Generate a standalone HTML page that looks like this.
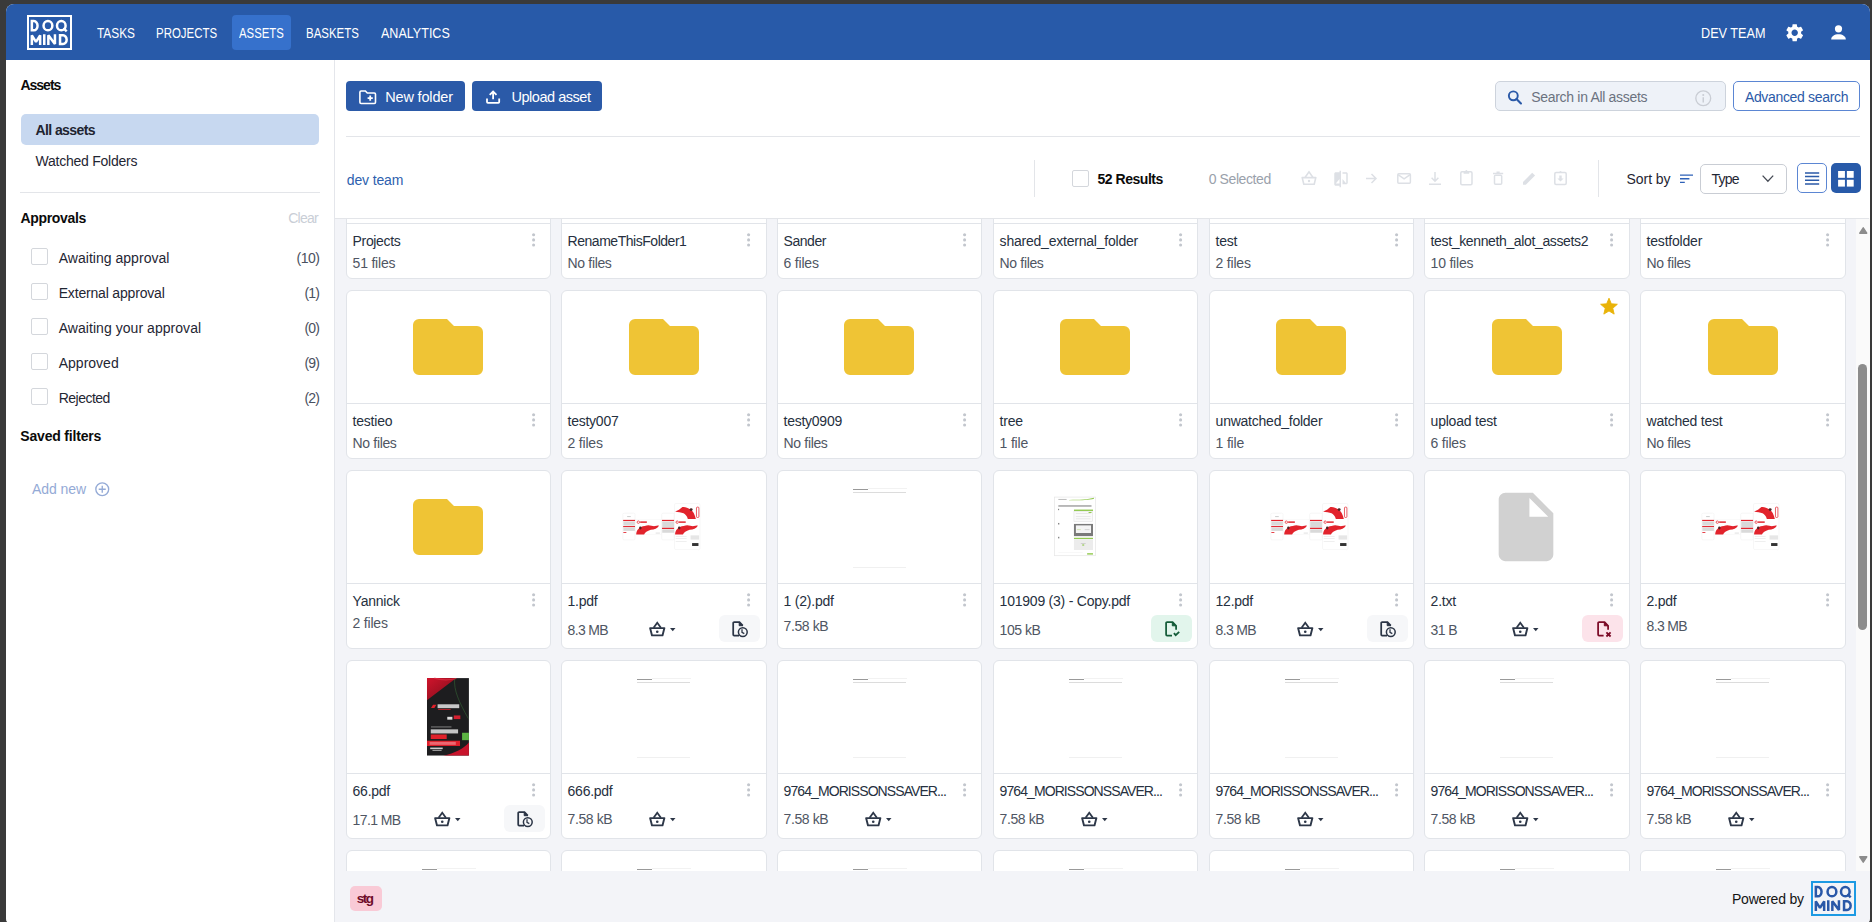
<!DOCTYPE html><html><head><meta charset="utf-8"><style>
*{margin:0;padding:0;box-sizing:border-box}
html,body{width:1872px;height:922px;overflow:hidden;background:#3a3a3a;font-family:"Liberation Sans",sans-serif}
.t{position:absolute;white-space:nowrap;line-height:1}
.b{position:absolute;display:block}
svg{position:absolute;overflow:visible}
#win{position:absolute;left:6px;top:4px;width:1864px;height:922px;border-radius:8px;overflow:hidden;background:#fff}
#pg{position:absolute;left:-6px;top:-4px;width:1872px;height:934px}
</style></head><body><div id="win"><div id="pg">
<header>
<div class="b" style="left:6px;top:4px;width:1864px;height:56px;background:#285aa9"></div>
<svg style="left:27px;top:15px;" width="45" height="35" viewBox="0 0 45 35"><rect x="1" y="1" width="43" height="33" fill="none" stroke="#fff" stroke-width="2"/><path d="M4.85 6.05h2.1a3.6 4.65 0 0 1 3.6 4.65a3.6 4.65 0 0 1-3.6 4.65h-2.1z" fill="none" stroke="#fff" stroke-width="2.5" stroke-miterlimit="1.5"/><ellipse cx="20.95" cy="10.7" rx="4.4" ry="4.65" fill="none" stroke="#fff" stroke-width="2.5" stroke-miterlimit="1.5"/><ellipse cx="34.3" cy="10.7" rx="4.3" ry="4.65" fill="none" stroke="#fff" stroke-width="2.5" stroke-miterlimit="1.5"/><path d="M36.4 13.2l3.3 3.1" fill="none" stroke="#fff" stroke-width="2.5" stroke-miterlimit="1.5"/><path d="M4.85 30.1V20.3l4.15 6.6 4.15-6.6v9.8" fill="none" stroke="#fff" stroke-width="2.5" stroke-miterlimit="1.5"/><path d="M17.25 19.3v10.8" fill="none" stroke="#fff" stroke-width="2.5" stroke-miterlimit="1.5"/><path d="M21.35 30.1V20.3l6.6 8.8v-9.8" fill="none" stroke="#fff" stroke-width="2.5" stroke-miterlimit="1.5"/><path d="M33.05 20.35h3a3.6 4.35 0 0 1 3.6 4.35a3.6 4.35 0 0 1-3.6 4.35h-3z" fill="none" stroke="#fff" stroke-width="2.5" stroke-miterlimit="1.5"/></svg>
<div class="b" style="left:232px;top:15px;width:59px;height:35px;background:#3671cc;border-radius:4px"></div>
<span class="t" style="left:96.70px;top:26.18px;font-size:14.50px;transform:scaleX(0.8178);transform-origin:0 0;color:#fff;">TASKS</span>
<span class="t" style="left:156.30px;top:26.18px;font-size:14.50px;transform:scaleX(0.7900);transform-origin:0 0;color:#fff;">PROJECTS</span>
<span class="t" style="left:239.20px;top:26.18px;font-size:14.50px;transform:scaleX(0.7830);transform-origin:0 0;color:#fff;">ASSETS</span>
<span class="t" style="left:305.90px;top:26.18px;font-size:14.50px;transform:scaleX(0.7909);transform-origin:0 0;color:#fff;">BASKETS</span>
<span class="t" style="left:380.90px;top:26.18px;font-size:14.50px;transform:scaleX(0.8654);transform-origin:0 0;color:#fff;">ANALYTICS</span>
<span class="t" style="left:1700.50px;top:25.68px;font-size:14.50px;transform:scaleX(0.8733);transform-origin:0 0;color:#fff;">DEV TEAM</span>
<svg style="left:1783.6px;top:21.8px;" width="21.4" height="21.4" viewBox="0 0 24 24"><path fill="#fff" d="M19.14 12.94c.04-.3.06-.61.06-.94 0-.32-.02-.64-.07-.94l2.03-1.58c.18-.14.23-.41.12-.61l-1.92-3.32c-.12-.22-.37-.29-.59-.22l-2.39.96c-.5-.38-1.03-.7-1.62-.94l-.36-2.54c-.04-.24-.24-.41-.48-.41h-3.84c-.24 0-.43.17-.47.41l-.36 2.54c-.59.24-1.13.57-1.62.94l-2.39-.96c-.22-.08-.47 0-.59.22L2.74 8.87c-.12.21-.08.47.12.61l2.03 1.58c-.05.3-.09.63-.09.94s.02.64.07.94l-2.03 1.58c-.18.14-.23.41-.12.61l1.92 3.32c.12.22.37.29.59.22l2.39-.96c.5.38 1.03.7 1.62.94l.36 2.54c.05.24.24.41.48.41h3.84c.24 0 .44-.17.47-.41l.36-2.54c.59-.24 1.13-.56 1.62-.94l2.39.96c.22.08.47 0 .59-.22l1.92-3.32c.12-.22.07-.47-.12-.61l-2.01-1.58zM12 15.6c-1.98 0-3.6-1.62-3.6-3.6s1.62-3.6 3.6-3.6 3.6 1.62 3.6 3.6-1.62 3.6-3.6 3.6z"/></svg>
<svg style="left:1831px;top:24.8px;" width="15" height="15" viewBox="0 0 15 15"><circle cx="7.5" cy="3.8" r="3.6" fill="#fff"/><path fill="#fff" d="M0.2 14.4c0-3.2 3.3-5.2 7.3-5.2s7.3 2 7.3 5.2z"/></svg>
</header>
<aside>
<div class="b" style="left:6px;top:60px;width:328px;height:870px;background:#fff;border-right:1px solid #e4e6eb;width:329px"></div>
<span class="t" style="left:20.40px;top:78.10px;font-size:14.00px;font-weight:bold;letter-spacing:-0.983px;color:#0b0b0b;">Assets</span>
<div class="b" style="left:21px;top:114px;width:298px;height:31px;background:#c7d8f0;border-radius:5px"></div>
<span class="t" style="left:35.50px;top:123.30px;font-size:14.00px;font-weight:bold;letter-spacing:-0.597px;color:#1e2430;">All assets</span>
<span class="t" style="left:35.50px;top:153.90px;font-size:14.00px;letter-spacing:-0.236px;color:#1f2633;">Watched Folders</span>
<div class="b" style="left:20px;top:192px;width:300px;height:1px;background:#e3e5e9"></div>
<span class="t" style="left:20.40px;top:210.80px;font-size:14.00px;font-weight:bold;letter-spacing:-0.308px;color:#0b0b0b;">Approvals</span>
<span class="t" style="left:288.20px;top:210.90px;font-size:14.00px;letter-spacing:-0.714px;color:#c9ced6;">Clear</span>
<div class="b" style="left:31px;top:248px;width:17px;height:17px;border:1px solid #d4d7dc;border-radius:2px;background:#fff"></div>
<span class="t" style="left:58.70px;top:250.60px;font-size:14.00px;letter-spacing:0.028px;color:#1f2633;">Awaiting approval</span>
<span class="t" style="left:296.60px;top:250.60px;font-size:14.00px;letter-spacing:-0.566px;color:#4a5160;">(10)</span>
<div class="b" style="left:31px;top:283px;width:17px;height:17px;border:1px solid #d4d7dc;border-radius:2px;background:#fff"></div>
<span class="t" style="left:58.70px;top:285.60px;font-size:14.00px;letter-spacing:-0.178px;color:#1f2633;">External approval</span>
<span class="t" style="left:304.60px;top:285.60px;font-size:14.00px;letter-spacing:-0.955px;color:#4a5160;">(1)</span>
<div class="b" style="left:31px;top:318px;width:17px;height:17px;border:1px solid #d4d7dc;border-radius:2px;background:#fff"></div>
<span class="t" style="left:58.70px;top:320.60px;font-size:14.00px;letter-spacing:0.049px;color:#1f2633;">Awaiting your approval</span>
<span class="t" style="left:304.60px;top:320.60px;font-size:14.00px;letter-spacing:-0.955px;color:#4a5160;">(0)</span>
<div class="b" style="left:31px;top:353px;width:17px;height:17px;border:1px solid #d4d7dc;border-radius:2px;background:#fff"></div>
<span class="t" style="left:58.70px;top:355.60px;font-size:14.00px;letter-spacing:0.010px;color:#1f2633;">Approved</span>
<span class="t" style="left:304.60px;top:355.60px;font-size:14.00px;letter-spacing:-0.955px;color:#4a5160;">(9)</span>
<div class="b" style="left:31px;top:388px;width:17px;height:17px;border:1px solid #d4d7dc;border-radius:2px;background:#fff"></div>
<span class="t" style="left:58.70px;top:390.60px;font-size:14.00px;letter-spacing:-0.508px;color:#1f2633;">Rejected</span>
<span class="t" style="left:304.60px;top:390.60px;font-size:14.00px;letter-spacing:-0.955px;color:#4a5160;">(2)</span>
<span class="t" style="left:20.30px;top:428.80px;font-size:14.00px;font-weight:bold;letter-spacing:-0.189px;color:#0b0b0b;">Saved filters</span>
<span class="t" style="left:32.00px;top:481.80px;font-size:14.00px;letter-spacing:-0.080px;color:#94aad6;">Add new</span>
<svg style="left:94.5px;top:481.5px;" width="14.5" height="14.5" viewBox="0 0 14 14"><circle cx="7" cy="7" r="6.2" fill="none" stroke="#94aad6" stroke-width="1.3"/><path d="M7 3.6v6.8M3.6 7h6.8" stroke="#94aad6" stroke-width="1.3"/></svg>
</aside>
<main>
<div class="b" style="left:335px;top:60px;width:1535px;height:158px;background:#fff"></div>
<div class="b" style="left:346px;top:81px;width:119px;height:30px;background:#2b5aa8;border-radius:4px"></div>
<svg style="left:358.8px;top:89.6px;" width="18" height="14" viewBox="0 0 18 14"><path d="M.9 2.2c0-.7.5-1.2 1.2-1.2h4.3l1.9 2h7c.7 0 1.2.5 1.2 1.2v8.1c0 .7-.5 1.2-1.2 1.2H2.1c-.7 0-1.2-.5-1.2-1.2z" fill="none" stroke="#fff" stroke-width="1.6"/><path d="M11.2 5.5v5.2M8.6 8.1h5.2" stroke="#fff" stroke-width="1.8"/></svg>
<span class="t" style="left:385.30px;top:89.97px;font-size:14.50px;letter-spacing:-0.178px;color:#fff;">New folder</span>
<div class="b" style="left:472px;top:81px;width:130px;height:30px;background:#2b5aa8;border-radius:4px"></div>
<svg style="left:486.3px;top:89.6px;" width="14.2" height="14" viewBox="0 0 14.2 14"><path d="M7.1 9.2V1.6M3.7 4.9l3.4-3.4 3.4 3.4" fill="none" stroke="#fff" stroke-width="1.8"/><path d="M1 8.6v3.4c0 .5.4.9.9.9h10.4c.5 0 .9-.4.9-.9V8.6" fill="none" stroke="#fff" stroke-width="1.8"/></svg>
<span class="t" style="left:511.40px;top:89.97px;font-size:14.50px;letter-spacing:-0.458px;color:#fff;">Upload asset</span>
<div class="b" style="left:1495px;top:81px;width:231px;height:30px;background:#eef2f8;border:1px solid #cdd3dc;border-radius:5px"></div>
<svg style="left:1507px;top:89.5px;" width="16.5" height="14.5" viewBox="0 0 16 15"><circle cx="6" cy="6" r="4.6" fill="none" stroke="#2b5aa8" stroke-width="2"/><path d="M9.3 9.3l4.6 4.6" stroke="#2b5aa8" stroke-width="2.2" stroke-linecap="round"/></svg>
<span class="t" style="left:1531.30px;top:90.40px;font-size:14.00px;letter-spacing:-0.314px;color:#6b7280;">Search in All assets</span>
<svg style="left:1695px;top:89.5px;" width="16.5" height="16.5" viewBox="0 0 16 16"><circle cx="8" cy="8" r="7.2" fill="none" stroke="#c9cdd4" stroke-width="1.3"/><circle cx="8" cy="4.9" r="1" fill="#c9cdd4"/><path d="M8 7v5" stroke="#c9cdd4" stroke-width="1.4"/></svg>
<div class="b" style="left:1733px;top:81px;width:127px;height:30px;border:1px solid #5b86d3;border-radius:5px;background:#fff"></div>
<span class="t" style="left:1744.90px;top:90.40px;font-size:14.00px;letter-spacing:-0.327px;color:#2b5aa8;">Advanced search</span>
<div class="b" style="left:346px;top:136px;width:1514px;height:1px;background:#e3e5e9"></div>
<span class="t" style="left:346.80px;top:172.60px;font-size:14.00px;letter-spacing:-0.141px;color:#2e5fae;">dev team</span>
<div class="b" style="left:1034px;top:160px;width:1px;height:37px;background:#e3e5e9"></div>
<div class="b" style="left:1072px;top:170px;width:17px;height:17px;border:1px solid #d4d7dc;border-radius:2px;background:#fff"></div>
<span class="t" style="left:1097.50px;top:172.10px;font-size:14.00px;font-weight:bold;letter-spacing:-0.470px;color:#0b0b0b;">52 Results</span>
<span class="t" style="left:1208.70px;top:172.10px;font-size:14.00px;letter-spacing:-0.395px;color:#9aa1ab;">0 Selected</span>
<svg style="left:1301px;top:171px;" width="16" height="14" viewBox="0 0 16 14"><path d="M1.2 6.6h13.6l-1.6 6.6H2.8z" fill="none" stroke="#dde0e5" stroke-width="1.6" stroke-linejoin="round"/><path d="M4.2 6.2L8 0.8l3.8 5.4" fill="none" stroke="#dde0e5" stroke-width="1.6"/><circle cx="8" cy="10" r="1.2" fill="#dde0e5"/></svg>
<svg style="left:1332px;top:169.65px;" width="18" height="18" viewBox="0 0 24 24"><path fill="#dde0e5" d="M10 3H5c-1.11 0-2 .9-2 2v14c0 1.1.89 2 2 2h5v2h2V1h-2v2zm0 15H5l5-6v6zm9-15h-5v2h5v13l-5-6v7h5c1.1 0 2-.9 2-2V5c0-1.1-.9-2-2-2z"/></svg>
<svg style="left:1366px;top:173px;" width="11.5" height="11" viewBox="0 0 11.5 11"><path d="M0 5.5h10M5.5 1l4.5 4.5L5.5 10" fill="none" stroke="#dde0e5" stroke-width="1.5"/></svg>
<svg style="left:1396.6px;top:173.2px;" width="14.2" height="11" viewBox="0 0 14.2 11"><rect x=".8" y=".8" width="12.6" height="9.4" rx="1" fill="none" stroke="#dde0e5" stroke-width="1.5"/><path d="M1 1.6l6.1 4.2 6.1-4.2" fill="none" stroke="#dde0e5" stroke-width="1.5"/></svg>
<svg style="left:1429px;top:172px;" width="12" height="13" viewBox="0 0 12 13"><path d="M6 0v9M2.6 5.8L6 9.2l3.4-3.4M0 12.2h12" fill="none" stroke="#dde0e5" stroke-width="1.5"/></svg>
<svg style="left:1460.3px;top:170px;" width="12.8" height="15.5" viewBox="0 0 12.8 15.5"><rect x=".8" y="1.8" width="11.2" height="13" rx="1.2" fill="none" stroke="#dde0e5" stroke-width="1.5"/><path d="M3.6 1.2h5.6v2.6H3.6z" fill="#dde0e5"/><circle cx="6.4" cy="1" r="1" fill="#dde0e5"/></svg>
<svg style="left:1492.7px;top:172px;" width="10.2" height="13" viewBox="0 0 10.2 13"><path d="M0 1.5h10.2" stroke="#dde0e5" stroke-width="1.5"/><path d="M3.5 .2h3.2" stroke="#dde0e5" stroke-width="1.5"/><rect x="1.5" y="3.2" width="7.2" height="9.1" rx="1" fill="none" stroke="#dde0e5" stroke-width="1.5"/></svg>
<svg style="left:1523px;top:172.3px;" width="13" height="12.7" viewBox="0 0 13 12.7"><path d="M0 12.7v-2.8L9.2.7l2.9 2.9L2.8 12.7z" fill="#dde0e5"/></svg>
<svg style="left:1554px;top:170.8px;" width="13" height="14.2" viewBox="0 0 13 14.2"><rect x=".8" y="1.6" width="11.4" height="11.8" rx="1.2" fill="none" stroke="#dde0e5" stroke-width="1.5"/><circle cx="6.5" cy="1" r="1" fill="#dde0e5"/><path d="M5.3 4.6h2.4v3h1.9L6.5 10.6 3.4 7.6h1.9z" fill="#dde0e5"/></svg>
<div class="b" style="left:1598px;top:160px;width:1px;height:37px;background:#e3e5e9"></div>
<span class="t" style="left:1626.60px;top:172.20px;font-size:14.00px;letter-spacing:-0.075px;color:#1f2633;">Sort by</span>
<svg style="left:1680px;top:174px;" width="13.5" height="10" viewBox="0 0 13.5 10"><path d="M0 1.1h13M0 4.75h9.4M0 8.4h4.8" stroke="#2f62b8" stroke-width="1.4"/></svg>
<div class="b" style="left:1700px;top:164px;width:86.5px;height:29.5px;border:1px solid #c9cdd4;border-radius:5px;background:#fff"></div>
<span class="t" style="left:1711.40px;top:172.20px;font-size:14.00px;letter-spacing:-0.717px;color:#1f2633;">Type</span>
<svg style="left:1762px;top:175.4px;" width="11.8" height="7" viewBox="0 0 11.8 7"><path d="M.6 .6l5.3 5.6L11.2.6" fill="none" stroke="#474c56" stroke-width="1.3"/></svg>
<div class="b" style="left:1797px;top:163px;width:29.5px;height:30px;border:1px solid #5b86d3;border-radius:5px;background:#fff"></div>
<svg style="left:1805.4px;top:172.2px;" width="14.2" height="12.5" viewBox="0 0 14.2 12.5"><path d="M0 .9h14.2M0 4.55h14.2M0 8.2h14.2M0 11.9h14.2" stroke="#2b5aa8" stroke-width="1.5"/></svg>
<div class="b" style="left:1831px;top:163px;width:29.5px;height:30px;background:#285aa9;border-radius:5px"></div>
<svg style="left:1837.6px;top:171px;" width="15.8" height="15.6" viewBox="0 0 16 16"><rect x="0" y="0" width="7" height="7" fill="#fff"/><rect x="9" y="0" width="7" height="7" fill="#fff"/><rect x="0" y="9" width="7" height="7" fill="#fff"/><rect x="9" y="9" width="7" height="7" fill="#fff"/></svg>
<div class="b" style="left:335px;top:218px;width:1535px;height:716px;background:#f3f4f8"></div>
<div class="b" style="left:335px;top:218px;width:1520px;height:653px;overflow:hidden">
<div class="b" style="left:11px;top:-108px;width:205px;height:169px;background:#fff;border:1px solid #e1e4e9;border-radius:6px"></div>
<div class="b" style="left:12px;top:5px;width:203px;height:1px;background:#e1e4e9"></div>
<svg style="left:78px;top:-79.5px;" width="70" height="56" viewBox="0 0 70 56"><path d="M0 6a6 6 0 0 1 6-6h28l7 7h23a6 6 0 0 1 6 6v37a6 6 0 0 1-6 6H6a6 6 0 0 1-6-6z" fill="#efc435"/></svg>
<span class="t" style="left:17.60px;top:16.10px;font-size:14.00px;letter-spacing:-0.354px;color:#263040;">Projects</span>
<svg style="left:197px;top:15.2px;" width="3.2" height="14" viewBox="0 0 3.2 14"><circle cx="1.6" cy="1.7" r="1.55" fill="#c2c6cd"/><circle cx="1.6" cy="6.9" r="1.55" fill="#c2c6cd"/><circle cx="1.6" cy="12.1" r="1.55" fill="#c2c6cd"/></svg>
<span class="t" style="left:17.60px;top:38.10px;font-size:14.00px;letter-spacing:-0.214px;color:#4f5663;">51 files</span>
<div class="b" style="left:226px;top:-108px;width:206px;height:169px;background:#fff;border:1px solid #e1e4e9;border-radius:6px"></div>
<div class="b" style="left:227px;top:5px;width:204px;height:1px;background:#e1e4e9"></div>
<svg style="left:293.5px;top:-79.5px;" width="70" height="56" viewBox="0 0 70 56"><path d="M0 6a6 6 0 0 1 6-6h28l7 7h23a6 6 0 0 1 6 6v37a6 6 0 0 1-6 6H6a6 6 0 0 1-6-6z" fill="#efc435"/></svg>
<span class="t" style="left:232.60px;top:16.10px;font-size:14.00px;letter-spacing:-0.471px;color:#263040;">RenameThisFolder1</span>
<svg style="left:412px;top:15.2px;" width="3.2" height="14" viewBox="0 0 3.2 14"><circle cx="1.6" cy="1.7" r="1.55" fill="#c2c6cd"/><circle cx="1.6" cy="6.9" r="1.55" fill="#c2c6cd"/><circle cx="1.6" cy="12.1" r="1.55" fill="#c2c6cd"/></svg>
<span class="t" style="left:232.60px;top:38.10px;font-size:14.00px;letter-spacing:-0.346px;color:#4f5663;">No files</span>
<div class="b" style="left:442px;top:-108px;width:205px;height:169px;background:#fff;border:1px solid #e1e4e9;border-radius:6px"></div>
<div class="b" style="left:443px;top:5px;width:203px;height:1px;background:#e1e4e9"></div>
<svg style="left:509px;top:-79.5px;" width="70" height="56" viewBox="0 0 70 56"><path d="M0 6a6 6 0 0 1 6-6h28l7 7h23a6 6 0 0 1 6 6v37a6 6 0 0 1-6 6H6a6 6 0 0 1-6-6z" fill="#efc435"/></svg>
<span class="t" style="left:448.60px;top:16.10px;font-size:14.00px;letter-spacing:-0.461px;color:#263040;">Sander</span>
<svg style="left:628px;top:15.2px;" width="3.2" height="14" viewBox="0 0 3.2 14"><circle cx="1.6" cy="1.7" r="1.55" fill="#c2c6cd"/><circle cx="1.6" cy="6.9" r="1.55" fill="#c2c6cd"/><circle cx="1.6" cy="12.1" r="1.55" fill="#c2c6cd"/></svg>
<span class="t" style="left:448.60px;top:38.10px;font-size:14.00px;letter-spacing:-0.202px;color:#4f5663;">6 files</span>
<div class="b" style="left:658px;top:-108px;width:205px;height:169px;background:#fff;border:1px solid #e1e4e9;border-radius:6px"></div>
<div class="b" style="left:659px;top:5px;width:203px;height:1px;background:#e1e4e9"></div>
<svg style="left:725px;top:-79.5px;" width="70" height="56" viewBox="0 0 70 56"><path d="M0 6a6 6 0 0 1 6-6h28l7 7h23a6 6 0 0 1 6 6v37a6 6 0 0 1-6 6H6a6 6 0 0 1-6-6z" fill="#efc435"/></svg>
<span class="t" style="left:664.60px;top:16.10px;font-size:14.00px;letter-spacing:-0.218px;color:#263040;">shared_external_folder</span>
<svg style="left:844px;top:15.2px;" width="3.2" height="14" viewBox="0 0 3.2 14"><circle cx="1.6" cy="1.7" r="1.55" fill="#c2c6cd"/><circle cx="1.6" cy="6.9" r="1.55" fill="#c2c6cd"/><circle cx="1.6" cy="12.1" r="1.55" fill="#c2c6cd"/></svg>
<span class="t" style="left:664.60px;top:38.10px;font-size:14.00px;letter-spacing:-0.346px;color:#4f5663;">No files</span>
<div class="b" style="left:874px;top:-108px;width:205px;height:169px;background:#fff;border:1px solid #e1e4e9;border-radius:6px"></div>
<div class="b" style="left:875px;top:5px;width:203px;height:1px;background:#e1e4e9"></div>
<svg style="left:941px;top:-79.5px;" width="70" height="56" viewBox="0 0 70 56"><path d="M0 6a6 6 0 0 1 6-6h28l7 7h23a6 6 0 0 1 6 6v37a6 6 0 0 1-6 6H6a6 6 0 0 1-6-6z" fill="#efc435"/></svg>
<span class="t" style="left:880.60px;top:16.10px;font-size:14.00px;letter-spacing:-0.241px;color:#263040;">test</span>
<svg style="left:1060px;top:15.2px;" width="3.2" height="14" viewBox="0 0 3.2 14"><circle cx="1.6" cy="1.7" r="1.55" fill="#c2c6cd"/><circle cx="1.6" cy="6.9" r="1.55" fill="#c2c6cd"/><circle cx="1.6" cy="12.1" r="1.55" fill="#c2c6cd"/></svg>
<span class="t" style="left:880.60px;top:38.10px;font-size:14.00px;letter-spacing:-0.202px;color:#4f5663;">2 files</span>
<div class="b" style="left:1089px;top:-108px;width:206px;height:169px;background:#fff;border:1px solid #e1e4e9;border-radius:6px"></div>
<div class="b" style="left:1090px;top:5px;width:204px;height:1px;background:#e1e4e9"></div>
<svg style="left:1156.5px;top:-79.5px;" width="70" height="56" viewBox="0 0 70 56"><path d="M0 6a6 6 0 0 1 6-6h28l7 7h23a6 6 0 0 1 6 6v37a6 6 0 0 1-6 6H6a6 6 0 0 1-6-6z" fill="#efc435"/></svg>
<span class="t" style="left:1095.60px;top:16.10px;font-size:14.00px;letter-spacing:-0.361px;color:#263040;">test_kenneth_alot_assets2</span>
<svg style="left:1275px;top:15.2px;" width="3.2" height="14" viewBox="0 0 3.2 14"><circle cx="1.6" cy="1.7" r="1.55" fill="#c2c6cd"/><circle cx="1.6" cy="6.9" r="1.55" fill="#c2c6cd"/><circle cx="1.6" cy="12.1" r="1.55" fill="#c2c6cd"/></svg>
<span class="t" style="left:1095.60px;top:38.10px;font-size:14.00px;letter-spacing:-0.214px;color:#4f5663;">10 files</span>
<div class="b" style="left:1305px;top:-108px;width:206px;height:169px;background:#fff;border:1px solid #e1e4e9;border-radius:6px"></div>
<div class="b" style="left:1306px;top:5px;width:204px;height:1px;background:#e1e4e9"></div>
<svg style="left:1372.5px;top:-79.5px;" width="70" height="56" viewBox="0 0 70 56"><path d="M0 6a6 6 0 0 1 6-6h28l7 7h23a6 6 0 0 1 6 6v37a6 6 0 0 1-6 6H6a6 6 0 0 1-6-6z" fill="#efc435"/></svg>
<span class="t" style="left:1311.60px;top:16.10px;font-size:14.00px;letter-spacing:-0.205px;color:#263040;">testfolder</span>
<svg style="left:1491px;top:15.2px;" width="3.2" height="14" viewBox="0 0 3.2 14"><circle cx="1.6" cy="1.7" r="1.55" fill="#c2c6cd"/><circle cx="1.6" cy="6.9" r="1.55" fill="#c2c6cd"/><circle cx="1.6" cy="12.1" r="1.55" fill="#c2c6cd"/></svg>
<span class="t" style="left:1311.60px;top:38.10px;font-size:14.00px;letter-spacing:-0.346px;color:#4f5663;">No files</span>
<div class="b" style="left:11px;top:72px;width:205px;height:169px;background:#fff;border:1px solid #e1e4e9;border-radius:6px"></div>
<div class="b" style="left:12px;top:185px;width:203px;height:1px;background:#e1e4e9"></div>
<svg style="left:78px;top:100.5px;" width="70" height="56" viewBox="0 0 70 56"><path d="M0 6a6 6 0 0 1 6-6h28l7 7h23a6 6 0 0 1 6 6v37a6 6 0 0 1-6 6H6a6 6 0 0 1-6-6z" fill="#efc435"/></svg>
<span class="t" style="left:17.60px;top:196.10px;font-size:14.00px;letter-spacing:-0.220px;color:#263040;">testieo</span>
<svg style="left:197px;top:195.2px;" width="3.2" height="14" viewBox="0 0 3.2 14"><circle cx="1.6" cy="1.7" r="1.55" fill="#c2c6cd"/><circle cx="1.6" cy="6.9" r="1.55" fill="#c2c6cd"/><circle cx="1.6" cy="12.1" r="1.55" fill="#c2c6cd"/></svg>
<span class="t" style="left:17.60px;top:218.10px;font-size:14.00px;letter-spacing:-0.346px;color:#4f5663;">No files</span>
<div class="b" style="left:226px;top:72px;width:206px;height:169px;background:#fff;border:1px solid #e1e4e9;border-radius:6px"></div>
<div class="b" style="left:227px;top:185px;width:204px;height:1px;background:#e1e4e9"></div>
<svg style="left:293.5px;top:100.5px;" width="70" height="56" viewBox="0 0 70 56"><path d="M0 6a6 6 0 0 1 6-6h28l7 7h23a6 6 0 0 1 6 6v37a6 6 0 0 1-6 6H6a6 6 0 0 1-6-6z" fill="#efc435"/></svg>
<span class="t" style="left:232.60px;top:196.10px;font-size:14.00px;letter-spacing:-0.259px;color:#263040;">testy007</span>
<svg style="left:412px;top:195.2px;" width="3.2" height="14" viewBox="0 0 3.2 14"><circle cx="1.6" cy="1.7" r="1.55" fill="#c2c6cd"/><circle cx="1.6" cy="6.9" r="1.55" fill="#c2c6cd"/><circle cx="1.6" cy="12.1" r="1.55" fill="#c2c6cd"/></svg>
<span class="t" style="left:232.60px;top:218.10px;font-size:14.00px;letter-spacing:-0.202px;color:#4f5663;">2 files</span>
<div class="b" style="left:442px;top:72px;width:205px;height:169px;background:#fff;border:1px solid #e1e4e9;border-radius:6px"></div>
<div class="b" style="left:443px;top:185px;width:203px;height:1px;background:#e1e4e9"></div>
<svg style="left:509px;top:100.5px;" width="70" height="56" viewBox="0 0 70 56"><path d="M0 6a6 6 0 0 1 6-6h28l7 7h23a6 6 0 0 1 6 6v37a6 6 0 0 1-6 6H6a6 6 0 0 1-6-6z" fill="#efc435"/></svg>
<span class="t" style="left:448.60px;top:196.10px;font-size:14.00px;letter-spacing:-0.262px;color:#263040;">testy0909</span>
<svg style="left:628px;top:195.2px;" width="3.2" height="14" viewBox="0 0 3.2 14"><circle cx="1.6" cy="1.7" r="1.55" fill="#c2c6cd"/><circle cx="1.6" cy="6.9" r="1.55" fill="#c2c6cd"/><circle cx="1.6" cy="12.1" r="1.55" fill="#c2c6cd"/></svg>
<span class="t" style="left:448.60px;top:218.10px;font-size:14.00px;letter-spacing:-0.346px;color:#4f5663;">No files</span>
<div class="b" style="left:658px;top:72px;width:205px;height:169px;background:#fff;border:1px solid #e1e4e9;border-radius:6px"></div>
<div class="b" style="left:659px;top:185px;width:203px;height:1px;background:#e1e4e9"></div>
<svg style="left:725px;top:100.5px;" width="70" height="56" viewBox="0 0 70 56"><path d="M0 6a6 6 0 0 1 6-6h28l7 7h23a6 6 0 0 1 6 6v37a6 6 0 0 1-6 6H6a6 6 0 0 1-6-6z" fill="#efc435"/></svg>
<span class="t" style="left:664.60px;top:196.10px;font-size:14.00px;letter-spacing:-0.257px;color:#263040;">tree</span>
<svg style="left:844px;top:195.2px;" width="3.2" height="14" viewBox="0 0 3.2 14"><circle cx="1.6" cy="1.7" r="1.55" fill="#c2c6cd"/><circle cx="1.6" cy="6.9" r="1.55" fill="#c2c6cd"/><circle cx="1.6" cy="12.1" r="1.55" fill="#c2c6cd"/></svg>
<span class="t" style="left:664.60px;top:218.10px;font-size:14.00px;letter-spacing:-0.197px;color:#4f5663;">1 file</span>
<div class="b" style="left:874px;top:72px;width:205px;height:169px;background:#fff;border:1px solid #e1e4e9;border-radius:6px"></div>
<div class="b" style="left:875px;top:185px;width:203px;height:1px;background:#e1e4e9"></div>
<svg style="left:941px;top:100.5px;" width="70" height="56" viewBox="0 0 70 56"><path d="M0 6a6 6 0 0 1 6-6h28l7 7h23a6 6 0 0 1 6 6v37a6 6 0 0 1-6 6H6a6 6 0 0 1-6-6z" fill="#efc435"/></svg>
<span class="t" style="left:880.60px;top:196.10px;font-size:14.00px;letter-spacing:-0.236px;color:#263040;">unwatched_folder</span>
<svg style="left:1060px;top:195.2px;" width="3.2" height="14" viewBox="0 0 3.2 14"><circle cx="1.6" cy="1.7" r="1.55" fill="#c2c6cd"/><circle cx="1.6" cy="6.9" r="1.55" fill="#c2c6cd"/><circle cx="1.6" cy="12.1" r="1.55" fill="#c2c6cd"/></svg>
<span class="t" style="left:880.60px;top:218.10px;font-size:14.00px;letter-spacing:-0.197px;color:#4f5663;">1 file</span>
<div class="b" style="left:1089px;top:72px;width:206px;height:169px;background:#fff;border:1px solid #e1e4e9;border-radius:6px"></div>
<div class="b" style="left:1090px;top:185px;width:204px;height:1px;background:#e1e4e9"></div>
<svg style="left:1156.5px;top:100.5px;" width="70" height="56" viewBox="0 0 70 56"><path d="M0 6a6 6 0 0 1 6-6h28l7 7h23a6 6 0 0 1 6 6v37a6 6 0 0 1-6 6H6a6 6 0 0 1-6-6z" fill="#efc435"/></svg>
<svg style="left:1264.1px;top:79px;" width="20" height="20" viewBox="0 0 20 20"><polygon points="10.00,1.20 12.33,6.80 18.37,7.28 13.77,11.22 15.17,17.12 10.00,13.96 4.83,17.12 6.23,11.22 1.63,7.28 7.67,6.80" fill="#e9b308" stroke="#e9b308" stroke-width="0.9" stroke-linejoin="round"/></svg>
<span class="t" style="left:1095.60px;top:196.10px;font-size:14.00px;letter-spacing:-0.219px;color:#263040;">upload test</span>
<svg style="left:1275px;top:195.2px;" width="3.2" height="14" viewBox="0 0 3.2 14"><circle cx="1.6" cy="1.7" r="1.55" fill="#c2c6cd"/><circle cx="1.6" cy="6.9" r="1.55" fill="#c2c6cd"/><circle cx="1.6" cy="12.1" r="1.55" fill="#c2c6cd"/></svg>
<span class="t" style="left:1095.60px;top:218.10px;font-size:14.00px;letter-spacing:-0.202px;color:#4f5663;">6 files</span>
<div class="b" style="left:1305px;top:72px;width:206px;height:169px;background:#fff;border:1px solid #e1e4e9;border-radius:6px"></div>
<div class="b" style="left:1306px;top:185px;width:204px;height:1px;background:#e1e4e9"></div>
<svg style="left:1372.5px;top:100.5px;" width="70" height="56" viewBox="0 0 70 56"><path d="M0 6a6 6 0 0 1 6-6h28l7 7h23a6 6 0 0 1 6 6v37a6 6 0 0 1-6 6H6a6 6 0 0 1-6-6z" fill="#efc435"/></svg>
<span class="t" style="left:1311.60px;top:196.10px;font-size:14.00px;letter-spacing:-0.229px;color:#263040;">watched test</span>
<svg style="left:1491px;top:195.2px;" width="3.2" height="14" viewBox="0 0 3.2 14"><circle cx="1.6" cy="1.7" r="1.55" fill="#c2c6cd"/><circle cx="1.6" cy="6.9" r="1.55" fill="#c2c6cd"/><circle cx="1.6" cy="12.1" r="1.55" fill="#c2c6cd"/></svg>
<span class="t" style="left:1311.60px;top:218.10px;font-size:14.00px;letter-spacing:-0.346px;color:#4f5663;">No files</span>
<div class="b" style="left:11px;top:252px;width:205px;height:179px;background:#fff;border:1px solid #e1e4e9;border-radius:6px"></div>
<div class="b" style="left:12px;top:365px;width:203px;height:1px;background:#e1e4e9"></div>
<svg style="left:78px;top:280.5px;" width="70" height="56" viewBox="0 0 70 56"><path d="M0 6a6 6 0 0 1 6-6h28l7 7h23a6 6 0 0 1 6 6v37a6 6 0 0 1-6 6H6a6 6 0 0 1-6-6z" fill="#efc435"/></svg>
<span class="t" style="left:17.60px;top:376.10px;font-size:14.00px;letter-spacing:-0.236px;color:#263040;">Yannick</span>
<svg style="left:197px;top:375.2px;" width="3.2" height="14" viewBox="0 0 3.2 14"><circle cx="1.6" cy="1.7" r="1.55" fill="#c2c6cd"/><circle cx="1.6" cy="6.9" r="1.55" fill="#c2c6cd"/><circle cx="1.6" cy="12.1" r="1.55" fill="#c2c6cd"/></svg>
<span class="t" style="left:17.60px;top:398.10px;font-size:14.00px;letter-spacing:-0.202px;color:#4f5663;">2 files</span>
<div class="b" style="left:226px;top:252px;width:206px;height:179px;background:#fff;border:1px solid #e1e4e9;border-radius:6px"></div>
<div class="b" style="left:227px;top:365px;width:204px;height:1px;background:#e1e4e9"></div>
<svg style="left:283px;top:280px;" width="90" height="56" viewBox="0 0 1482 922"><rect x="80" y="250" width="200" height="440" rx="20" fill="#fff" stroke="#eee" stroke-width="8"/><rect x="150" y="298" width="60" height="16" fill="#ccc"/><rect x="85" y="360" width="195" height="20" fill="#e2232c"/><rect x="88" y="388" width="190" height="66" fill="#d9d9d9"/><rect x="85" y="462" width="195" height="18" fill="#e2232c"/><rect x="88" y="486" width="190" height="56" fill="#d9d9d9"/><rect x="88" y="560" width="50" height="14" fill="#e2232c"/><rect x="290" y="350" width="420" height="255" fill="#fff" stroke="#f0f0f0" stroke-width="6"/><circle cx="335" cy="398" r="20" fill="none" stroke="#e2232c" stroke-width="12"/><rect x="365" y="385" width="110" height="24" fill="#e2232c"/><path d="M300 600C300 530 350 470 440 460C520 430 560 470 610 462C640 455 660 450 675 458C650 505 600 520 540 522C480 540 445 565 430 600Z" fill="#e2232c"/><ellipse cx="368" cy="495" rx="20" ry="24" fill="#4a2424"/><rect x="620" y="572" width="70" height="10" fill="#ccc"/><rect x="720" y="250" width="205" height="440" rx="20" fill="#fff" stroke="#eee" stroke-width="8"/><rect x="725" y="360" width="200" height="20" fill="#e2232c"/><rect x="728" y="388" width="195" height="100" fill="#d9d9d9"/><rect x="725" y="490" width="200" height="20" fill="#e2232c"/><rect x="728" y="516" width="195" height="56" fill="#d9d9d9"/><rect x="930" y="90" width="420" height="760" rx="24" fill="#fff" stroke="#eee" stroke-width="8"/><path d="M940 222C990 205 1030 180 1060 150C1100 140 1150 165 1190 185C1240 215 1262 270 1282 345L1150 345C1138 295 1102 262 1080 252C1040 240 990 232 940 222Z" fill="#e2232c"/><ellipse cx="1205" cy="190" rx="24" ry="22" fill="#4a2424"/><rect x="1292" y="150" width="40" height="170" rx="14" fill="none" stroke="#e2232c" stroke-width="12"/><circle cx="975" cy="398" r="20" fill="none" stroke="#e2232c" stroke-width="12"/><rect x="1005" y="385" width="110" height="24" fill="#e2232c"/><path d="M940 600C940 530 990 470 1080 460C1160 430 1200 470 1250 462C1280 455 1300 450 1315 458C1290 505 1240 520 1180 522C1120 540 1085 565 1070 600Z" fill="#e2232c"/><ellipse cx="1008" cy="495" rx="20" ry="24" fill="#4a2424"/><rect x="950" y="625" width="180" height="8" fill="#ddd"/><rect x="950" y="660" width="180" height="8" fill="#ddd"/><rect x="950" y="710" width="180" height="8" fill="#ddd"/><rect x="1195" y="615" width="140" height="70" fill="#e6e6e6"/><rect x="1220" y="742" width="105" height="48" fill="#333"/></svg>
<span class="t" style="left:232.60px;top:376.10px;font-size:14.00px;letter-spacing:-0.259px;color:#263040;">1.pdf</span>
<svg style="left:412px;top:375.2px;" width="3.2" height="14" viewBox="0 0 3.2 14"><circle cx="1.6" cy="1.7" r="1.55" fill="#c2c6cd"/><circle cx="1.6" cy="6.9" r="1.55" fill="#c2c6cd"/><circle cx="1.6" cy="12.1" r="1.55" fill="#c2c6cd"/></svg>
<span class="t" style="left:232.60px;top:405.10px;font-size:14.00px;letter-spacing:-0.686px;color:#4f5663;">8.3 MB</span>
<svg style="left:314px;top:403.5px;" width="16.5" height="14.5" viewBox="0 0 16.5 14.5"><path d="M1.1 6.1h14.3l-1.9 7.3H3z" fill="none" stroke="#2d3748" stroke-width="1.9" stroke-linejoin="round"/><path d="M4.6 5.8L8.25 .8l3.65 5" fill="none" stroke="#2d3748" stroke-width="1.8"/><circle cx="8.25" cy="9.7" r="1.3" fill="#2d3748"/></svg><svg style="left:335.4px;top:409.7px;" width="5.5" height="3.2" viewBox="0 0 5.5 3.2"><path d="M0 0h5.5L2.75 3.2z" fill="#2d3748"/></svg>
<div class="b" style="left:383.8px;top:397px;width:41px;height:27px;background:#f6f7f9;border-radius:6px"></div><svg style="left:383.8px;top:397px;" width="41" height="27" viewBox="0 0 41 27"><path d="M20 20.5H15.2c-.6 0-1-.4-1-1V8.1c0-.6.4-1 1-1h5.3l3.3 3.5" fill="none" stroke="#2b3546" stroke-width="1.75"/><path d="M20.2 7.1v3.6h3.6z" fill="#2b3546" stroke="#2b3546" stroke-width="1"/><circle cx="23.8" cy="17.1" r="4.4" fill="#f6f7f9" stroke="#2b3546" stroke-width="1.5"/><path d="M23 14.3v3l2.3 1.3" fill="none" stroke="#2b3546" stroke-width="1.3"/></svg>
<div class="b" style="left:442px;top:252px;width:205px;height:179px;background:#fff;border:1px solid #e1e4e9;border-radius:6px"></div>
<div class="b" style="left:443px;top:365px;width:203px;height:1px;background:#e1e4e9"></div>
<div class="b" style="left:518px;top:270.7px;width:14.5px;height:1.8px;background:#333;opacity:.5"></div><div class="b" style="left:532.5px;top:270px;width:39px;height:1px;background:#f2f2f2"></div><div class="b" style="left:518px;top:274px;width:53px;height:1px;background:#dcdcdc"></div><div class="b" style="left:518px;top:349.2px;width:53px;height:1px;background:#f0f0f0"></div>
<span class="t" style="left:448.60px;top:376.10px;font-size:14.00px;letter-spacing:-0.218px;color:#263040;">1 (2).pdf</span>
<svg style="left:628px;top:375.2px;" width="3.2" height="14" viewBox="0 0 3.2 14"><circle cx="1.6" cy="1.7" r="1.55" fill="#c2c6cd"/><circle cx="1.6" cy="6.9" r="1.55" fill="#c2c6cd"/><circle cx="1.6" cy="12.1" r="1.55" fill="#c2c6cd"/></svg>
<span class="t" style="left:448.60px;top:401.10px;font-size:14.00px;letter-spacing:-0.416px;color:#4f5663;">7.58 kB</span>
<div class="b" style="left:658px;top:252px;width:205px;height:179px;background:#fff;border:1px solid #e1e4e9;border-radius:6px"></div>
<div class="b" style="left:659px;top:365px;width:203px;height:1px;background:#e1e4e9"></div>
<svg style="left:695px;top:262px;" width="100" height="90" viewBox="0 0 1024 922"><rect x="250" y="175" width="420" height="600" fill="#fff" stroke="#e8e8e8" stroke-width="8"/><rect x="290" y="194" width="85" height="10" fill="#bbb"/><path d="M400 205C500 205 600 200 655 183L655 192C600 205 500 210 400 208Z" fill="#8fc84a"/><rect x="290" y="258" width="340" height="16" fill="#a8a8a8"/><rect x="288" y="295" width="10" height="14" fill="#777"/><rect x="450" y="303" width="195" height="14" fill="#8fc84a"/><rect x="450" y="320" width="192" height="105" fill="#fafafa" stroke="#ddd" stroke-width="5"/><rect x="470" y="340" width="150" height="6" fill="#ddd"/><rect x="470" y="372" width="150" height="6" fill="#ddd"/><rect x="470" y="395" width="150" height="6" fill="#ddd"/><rect x="600" y="328" width="30" height="10" fill="#8fc84a"/><rect x="288" y="440" width="12" height="16" fill="#777"/><rect x="450" y="450" width="195" height="125" fill="#7a7a7a"/><rect x="470" y="465" width="155" height="78" fill="#f4f4f4"/><rect x="480" y="505" width="40" height="8" fill="#cde3a8"/><rect x="560" y="505" width="50" height="8" fill="#ccc"/><rect x="288" y="582" width="12" height="16" fill="#777"/><rect x="450" y="592" width="195" height="12" fill="#8fc84a"/><rect x="450" y="607" width="195" height="110" fill="#ececec"/><rect x="520" y="648" width="50" height="6" fill="#bbb"/><rect x="535" y="660" width="20" height="12" fill="#8fc84a"/><rect x="290" y="742" width="250" height="4" fill="#eee"/><rect x="585" y="750" width="60" height="14" fill="#8fc84a"/></svg>
<span class="t" style="left:664.60px;top:376.10px;font-size:14.00px;letter-spacing:-0.226px;color:#263040;">101909 (3) - Copy.pdf</span>
<svg style="left:844px;top:375.2px;" width="3.2" height="14" viewBox="0 0 3.2 14"><circle cx="1.6" cy="1.7" r="1.55" fill="#c2c6cd"/><circle cx="1.6" cy="6.9" r="1.55" fill="#c2c6cd"/><circle cx="1.6" cy="12.1" r="1.55" fill="#c2c6cd"/></svg>
<span class="t" style="left:664.60px;top:405.10px;font-size:14.00px;letter-spacing:-0.474px;color:#4f5663;">105 kB</span>
<div class="b" style="left:815.8px;top:397px;width:41px;height:27px;background:#e2f5ec;border-radius:6px"></div><svg style="left:815.8px;top:397px;" width="41" height="27" viewBox="0 0 41 27"><path d="M21 20.5h-4.9c-.6 0-1-.4-1-1V8.1c0-.6.4-1 1-1h5.5l3.5 3.7v3.9" fill="none" stroke="#145c39" stroke-width="1.75"/><path d="M21.3 7.1v3.7h3.7z" fill="#145c39" stroke="#145c39" stroke-width="1"/><path d="M22.9 18.2l1.8 2 3.5-3.3" fill="none" stroke="#145c39" stroke-width="1.8"/></svg>
<div class="b" style="left:874px;top:252px;width:205px;height:179px;background:#fff;border:1px solid #e1e4e9;border-radius:6px"></div>
<div class="b" style="left:875px;top:365px;width:203px;height:1px;background:#e1e4e9"></div>
<svg style="left:931px;top:280px;" width="90" height="56" viewBox="0 0 1482 922"><rect x="80" y="250" width="200" height="440" rx="20" fill="#fff" stroke="#eee" stroke-width="8"/><rect x="150" y="298" width="60" height="16" fill="#ccc"/><rect x="85" y="360" width="195" height="20" fill="#e2232c"/><rect x="88" y="388" width="190" height="66" fill="#d9d9d9"/><rect x="85" y="462" width="195" height="18" fill="#e2232c"/><rect x="88" y="486" width="190" height="56" fill="#d9d9d9"/><rect x="88" y="560" width="50" height="14" fill="#e2232c"/><rect x="290" y="350" width="420" height="255" fill="#fff" stroke="#f0f0f0" stroke-width="6"/><circle cx="335" cy="398" r="20" fill="none" stroke="#e2232c" stroke-width="12"/><rect x="365" y="385" width="110" height="24" fill="#e2232c"/><path d="M300 600C300 530 350 470 440 460C520 430 560 470 610 462C640 455 660 450 675 458C650 505 600 520 540 522C480 540 445 565 430 600Z" fill="#e2232c"/><ellipse cx="368" cy="495" rx="20" ry="24" fill="#4a2424"/><rect x="620" y="572" width="70" height="10" fill="#ccc"/><rect x="720" y="250" width="205" height="440" rx="20" fill="#fff" stroke="#eee" stroke-width="8"/><rect x="725" y="360" width="200" height="20" fill="#e2232c"/><rect x="728" y="388" width="195" height="100" fill="#d9d9d9"/><rect x="725" y="490" width="200" height="20" fill="#e2232c"/><rect x="728" y="516" width="195" height="56" fill="#d9d9d9"/><rect x="930" y="90" width="420" height="760" rx="24" fill="#fff" stroke="#eee" stroke-width="8"/><path d="M940 222C990 205 1030 180 1060 150C1100 140 1150 165 1190 185C1240 215 1262 270 1282 345L1150 345C1138 295 1102 262 1080 252C1040 240 990 232 940 222Z" fill="#e2232c"/><ellipse cx="1205" cy="190" rx="24" ry="22" fill="#4a2424"/><rect x="1292" y="150" width="40" height="170" rx="14" fill="none" stroke="#e2232c" stroke-width="12"/><circle cx="975" cy="398" r="20" fill="none" stroke="#e2232c" stroke-width="12"/><rect x="1005" y="385" width="110" height="24" fill="#e2232c"/><path d="M940 600C940 530 990 470 1080 460C1160 430 1200 470 1250 462C1280 455 1300 450 1315 458C1290 505 1240 520 1180 522C1120 540 1085 565 1070 600Z" fill="#e2232c"/><ellipse cx="1008" cy="495" rx="20" ry="24" fill="#4a2424"/><rect x="950" y="625" width="180" height="8" fill="#ddd"/><rect x="950" y="660" width="180" height="8" fill="#ddd"/><rect x="950" y="710" width="180" height="8" fill="#ddd"/><rect x="1195" y="615" width="140" height="70" fill="#e6e6e6"/><rect x="1220" y="742" width="105" height="48" fill="#333"/></svg>
<span class="t" style="left:880.60px;top:376.10px;font-size:14.00px;letter-spacing:-0.265px;color:#263040;">12.pdf</span>
<svg style="left:1060px;top:375.2px;" width="3.2" height="14" viewBox="0 0 3.2 14"><circle cx="1.6" cy="1.7" r="1.55" fill="#c2c6cd"/><circle cx="1.6" cy="6.9" r="1.55" fill="#c2c6cd"/><circle cx="1.6" cy="12.1" r="1.55" fill="#c2c6cd"/></svg>
<span class="t" style="left:880.60px;top:405.10px;font-size:14.00px;letter-spacing:-0.686px;color:#4f5663;">8.3 MB</span>
<svg style="left:962px;top:403.5px;" width="16.5" height="14.5" viewBox="0 0 16.5 14.5"><path d="M1.1 6.1h14.3l-1.9 7.3H3z" fill="none" stroke="#2d3748" stroke-width="1.9" stroke-linejoin="round"/><path d="M4.6 5.8L8.25 .8l3.65 5" fill="none" stroke="#2d3748" stroke-width="1.8"/><circle cx="8.25" cy="9.7" r="1.3" fill="#2d3748"/></svg><svg style="left:983.4px;top:409.7px;" width="5.5" height="3.2" viewBox="0 0 5.5 3.2"><path d="M0 0h5.5L2.75 3.2z" fill="#2d3748"/></svg>
<div class="b" style="left:1031.8px;top:397px;width:41px;height:27px;background:#f6f7f9;border-radius:6px"></div><svg style="left:1031.8px;top:397px;" width="41" height="27" viewBox="0 0 41 27"><path d="M20 20.5H15.2c-.6 0-1-.4-1-1V8.1c0-.6.4-1 1-1h5.3l3.3 3.5" fill="none" stroke="#2b3546" stroke-width="1.75"/><path d="M20.2 7.1v3.6h3.6z" fill="#2b3546" stroke="#2b3546" stroke-width="1"/><circle cx="23.8" cy="17.1" r="4.4" fill="#f6f7f9" stroke="#2b3546" stroke-width="1.5"/><path d="M23 14.3v3l2.3 1.3" fill="none" stroke="#2b3546" stroke-width="1.3"/></svg>
<div class="b" style="left:1089px;top:252px;width:206px;height:179px;background:#fff;border:1px solid #e1e4e9;border-radius:6px"></div>
<div class="b" style="left:1090px;top:365px;width:204px;height:1px;background:#e1e4e9"></div>
<svg style="left:1150.3px;top:267.8px;" width="82" height="82" viewBox="0 0 24 24"><path d="M6 2c-1.1 0-1.99.9-1.99 2L4 20c0 1.1.89 2 1.99 2H18c1.1 0 2-.9 2-2V8l-6-6H6zm7 7V3.5L18.5 9H13z" fill="#d1d1d1"/></svg>
<span class="t" style="left:1095.60px;top:376.10px;font-size:14.00px;letter-spacing:-0.221px;color:#263040;">2.txt</span>
<svg style="left:1275px;top:375.2px;" width="3.2" height="14" viewBox="0 0 3.2 14"><circle cx="1.6" cy="1.7" r="1.55" fill="#c2c6cd"/><circle cx="1.6" cy="6.9" r="1.55" fill="#c2c6cd"/><circle cx="1.6" cy="12.1" r="1.55" fill="#c2c6cd"/></svg>
<span class="t" style="left:1095.60px;top:405.10px;font-size:14.00px;letter-spacing:-0.620px;color:#4f5663;">31 B</span>
<svg style="left:1177px;top:403.5px;" width="16.5" height="14.5" viewBox="0 0 16.5 14.5"><path d="M1.1 6.1h14.3l-1.9 7.3H3z" fill="none" stroke="#2d3748" stroke-width="1.9" stroke-linejoin="round"/><path d="M4.6 5.8L8.25 .8l3.65 5" fill="none" stroke="#2d3748" stroke-width="1.8"/><circle cx="8.25" cy="9.7" r="1.3" fill="#2d3748"/></svg><svg style="left:1198.4px;top:409.7px;" width="5.5" height="3.2" viewBox="0 0 5.5 3.2"><path d="M0 0h5.5L2.75 3.2z" fill="#2d3748"/></svg>
<div class="b" style="left:1246.8px;top:397px;width:41px;height:27px;background:#fce3ea;border-radius:6px"></div><svg style="left:1246.8px;top:397px;" width="41" height="27" viewBox="0 0 41 27"><path d="M21.6 20.5h-4.5c-.6 0-1-.4-1-1V8.1c0-.6.4-1 1-1h5.5l3.5 3.7v3.9" fill="none" stroke="#7c0b27" stroke-width="1.75"/><path d="M22.3 7.1v3.7h3.7z" fill="#7c0b27" stroke="#7c0b27" stroke-width="1"/><path d="M24.4 17.3l4.2 4.2M28.6 17.3l-4.2 4.2" fill="none" stroke="#7c0b27" stroke-width="1.8"/></svg>
<div class="b" style="left:1305px;top:252px;width:206px;height:179px;background:#fff;border:1px solid #e1e4e9;border-radius:6px"></div>
<div class="b" style="left:1306px;top:365px;width:204px;height:1px;background:#e1e4e9"></div>
<svg style="left:1362px;top:280px;" width="90" height="56" viewBox="0 0 1482 922"><rect x="80" y="250" width="200" height="440" rx="20" fill="#fff" stroke="#eee" stroke-width="8"/><rect x="150" y="298" width="60" height="16" fill="#ccc"/><rect x="85" y="360" width="195" height="20" fill="#e2232c"/><rect x="88" y="388" width="190" height="66" fill="#d9d9d9"/><rect x="85" y="462" width="195" height="18" fill="#e2232c"/><rect x="88" y="486" width="190" height="56" fill="#d9d9d9"/><rect x="88" y="560" width="50" height="14" fill="#e2232c"/><rect x="290" y="350" width="420" height="255" fill="#fff" stroke="#f0f0f0" stroke-width="6"/><circle cx="335" cy="398" r="20" fill="none" stroke="#e2232c" stroke-width="12"/><rect x="365" y="385" width="110" height="24" fill="#e2232c"/><path d="M300 600C300 530 350 470 440 460C520 430 560 470 610 462C640 455 660 450 675 458C650 505 600 520 540 522C480 540 445 565 430 600Z" fill="#e2232c"/><ellipse cx="368" cy="495" rx="20" ry="24" fill="#4a2424"/><rect x="620" y="572" width="70" height="10" fill="#ccc"/><rect x="720" y="250" width="205" height="440" rx="20" fill="#fff" stroke="#eee" stroke-width="8"/><rect x="725" y="360" width="200" height="20" fill="#e2232c"/><rect x="728" y="388" width="195" height="100" fill="#d9d9d9"/><rect x="725" y="490" width="200" height="20" fill="#e2232c"/><rect x="728" y="516" width="195" height="56" fill="#d9d9d9"/><rect x="930" y="90" width="420" height="760" rx="24" fill="#fff" stroke="#eee" stroke-width="8"/><path d="M940 222C990 205 1030 180 1060 150C1100 140 1150 165 1190 185C1240 215 1262 270 1282 345L1150 345C1138 295 1102 262 1080 252C1040 240 990 232 940 222Z" fill="#e2232c"/><ellipse cx="1205" cy="190" rx="24" ry="22" fill="#4a2424"/><rect x="1292" y="150" width="40" height="170" rx="14" fill="none" stroke="#e2232c" stroke-width="12"/><circle cx="975" cy="398" r="20" fill="none" stroke="#e2232c" stroke-width="12"/><rect x="1005" y="385" width="110" height="24" fill="#e2232c"/><path d="M940 600C940 530 990 470 1080 460C1160 430 1200 470 1250 462C1280 455 1300 450 1315 458C1290 505 1240 520 1180 522C1120 540 1085 565 1070 600Z" fill="#e2232c"/><ellipse cx="1008" cy="495" rx="20" ry="24" fill="#4a2424"/><rect x="950" y="625" width="180" height="8" fill="#ddd"/><rect x="950" y="660" width="180" height="8" fill="#ddd"/><rect x="950" y="710" width="180" height="8" fill="#ddd"/><rect x="1195" y="615" width="140" height="70" fill="#e6e6e6"/><rect x="1220" y="742" width="105" height="48" fill="#333"/></svg>
<span class="t" style="left:1311.60px;top:376.10px;font-size:14.00px;letter-spacing:-0.259px;color:#263040;">2.pdf</span>
<svg style="left:1491px;top:375.2px;" width="3.2" height="14" viewBox="0 0 3.2 14"><circle cx="1.6" cy="1.7" r="1.55" fill="#c2c6cd"/><circle cx="1.6" cy="6.9" r="1.55" fill="#c2c6cd"/><circle cx="1.6" cy="12.1" r="1.55" fill="#c2c6cd"/></svg>
<span class="t" style="left:1311.60px;top:401.10px;font-size:14.00px;letter-spacing:-0.686px;color:#4f5663;">8.3 MB</span>
<div class="b" style="left:11px;top:442px;width:205px;height:179px;background:#fff;border:1px solid #e1e4e9;border-radius:6px"></div>
<div class="b" style="left:12px;top:555px;width:203px;height:1px;background:#e1e4e9"></div>
<svg style="left:65px;top:447px;" width="100" height="105" viewBox="0 0 878 922"><defs><linearGradient id="ag1" x1="0" y1="0" x2="1" y2="1"><stop offset="0" stop-color="#d0142c"/><stop offset="1" stop-color="#7a0d1a"/></linearGradient></defs><rect x="237" y="115" width="368" height="680" fill="#1d1d1f"/><path d="M237 115H495C420 170 330 240 237 310Z" fill="url(#ag1)"/><path d="M300 115C380 140 450 130 495 118" stroke="#e8344a" stroke-width="10" fill="none" opacity=".6"/><path d="M480 120C470 220 520 330 600 470" stroke="#3b7a3b" stroke-width="4" fill="none"/><path d="M272 378l18-28h30l-18 28z" fill="#e0202a"/><rect x="330" y="345" width="190" height="34" fill="#f2f2f2" opacity=".8"/><rect x="335" y="386" width="110" height="8" fill="#c0202a"/><rect x="415" y="455" width="45" height="25" fill="#ddd"/><rect x="472" y="443" width="58" height="32" fill="#d42030"/><rect x="272" y="540" width="180" height="8" fill="#888"/><rect x="270" y="565" width="240" height="36" fill="#efefef" opacity=".8"/><rect x="270" y="610" width="140" height="40" fill="#e0202a"/><rect x="545" y="595" width="60" height="65" fill="#5cb543"/><rect x="237" y="665" width="290" height="46" fill="#e01f2b"/><rect x="260" y="675" width="230" height="26" fill="#f39aa0" opacity=".6"/><rect x="265" y="725" width="110" height="14" fill="#ccc"/><rect x="285" y="745" width="80" height="10" fill="#999"/><path d="M605 680C560 735 480 775 380 795H605Z" fill="#c8142c"/></svg>
<span class="t" style="left:17.60px;top:566.10px;font-size:14.00px;letter-spacing:-0.265px;color:#263040;">66.pdf</span>
<svg style="left:197px;top:565.2px;" width="3.2" height="14" viewBox="0 0 3.2 14"><circle cx="1.6" cy="1.7" r="1.55" fill="#c2c6cd"/><circle cx="1.6" cy="6.9" r="1.55" fill="#c2c6cd"/><circle cx="1.6" cy="12.1" r="1.55" fill="#c2c6cd"/></svg>
<span class="t" style="left:17.60px;top:595.10px;font-size:14.00px;letter-spacing:-0.620px;color:#4f5663;">17.1 MB</span>
<svg style="left:99px;top:593.5px;" width="16.5" height="14.5" viewBox="0 0 16.5 14.5"><path d="M1.1 6.1h14.3l-1.9 7.3H3z" fill="none" stroke="#2d3748" stroke-width="1.9" stroke-linejoin="round"/><path d="M4.6 5.8L8.25 .8l3.65 5" fill="none" stroke="#2d3748" stroke-width="1.8"/><circle cx="8.25" cy="9.7" r="1.3" fill="#2d3748"/></svg><svg style="left:120.4px;top:599.7px;" width="5.5" height="3.2" viewBox="0 0 5.5 3.2"><path d="M0 0h5.5L2.75 3.2z" fill="#2d3748"/></svg>
<div class="b" style="left:168.8px;top:587px;width:41px;height:27px;background:#f6f7f9;border-radius:6px"></div><svg style="left:168.8px;top:587px;" width="41" height="27" viewBox="0 0 41 27"><path d="M20 20.5H15.2c-.6 0-1-.4-1-1V8.1c0-.6.4-1 1-1h5.3l3.3 3.5" fill="none" stroke="#2b3546" stroke-width="1.75"/><path d="M20.2 7.1v3.6h3.6z" fill="#2b3546" stroke="#2b3546" stroke-width="1"/><circle cx="23.8" cy="17.1" r="4.4" fill="#f6f7f9" stroke="#2b3546" stroke-width="1.5"/><path d="M23 14.3v3l2.3 1.3" fill="none" stroke="#2b3546" stroke-width="1.3"/></svg>
<div class="b" style="left:226px;top:442px;width:206px;height:179px;background:#fff;border:1px solid #e1e4e9;border-radius:6px"></div>
<div class="b" style="left:227px;top:555px;width:204px;height:1px;background:#e1e4e9"></div>
<div class="b" style="left:302px;top:460.7px;width:14.5px;height:1.8px;background:#333;opacity:.5"></div><div class="b" style="left:316.5px;top:460px;width:39px;height:1px;background:#f2f2f2"></div><div class="b" style="left:302px;top:464px;width:53px;height:1px;background:#dcdcdc"></div><div class="b" style="left:302px;top:539.2px;width:53px;height:1px;background:#f0f0f0"></div>
<span class="t" style="left:232.60px;top:566.10px;font-size:14.00px;letter-spacing:-0.269px;color:#263040;">666.pdf</span>
<svg style="left:412px;top:565.2px;" width="3.2" height="14" viewBox="0 0 3.2 14"><circle cx="1.6" cy="1.7" r="1.55" fill="#c2c6cd"/><circle cx="1.6" cy="6.9" r="1.55" fill="#c2c6cd"/><circle cx="1.6" cy="12.1" r="1.55" fill="#c2c6cd"/></svg>
<span class="t" style="left:232.60px;top:594.10px;font-size:14.00px;letter-spacing:-0.416px;color:#4f5663;">7.58 kB</span>
<svg style="left:314px;top:593.5px;" width="16.5" height="14.5" viewBox="0 0 16.5 14.5"><path d="M1.1 6.1h14.3l-1.9 7.3H3z" fill="none" stroke="#2d3748" stroke-width="1.9" stroke-linejoin="round"/><path d="M4.6 5.8L8.25 .8l3.65 5" fill="none" stroke="#2d3748" stroke-width="1.8"/><circle cx="8.25" cy="9.7" r="1.3" fill="#2d3748"/></svg><svg style="left:335.4px;top:599.7px;" width="5.5" height="3.2" viewBox="0 0 5.5 3.2"><path d="M0 0h5.5L2.75 3.2z" fill="#2d3748"/></svg>
<div class="b" style="left:442px;top:442px;width:205px;height:179px;background:#fff;border:1px solid #e1e4e9;border-radius:6px"></div>
<div class="b" style="left:443px;top:555px;width:203px;height:1px;background:#e1e4e9"></div>
<div class="b" style="left:518px;top:460.7px;width:14.5px;height:1.8px;background:#333;opacity:.5"></div><div class="b" style="left:532.5px;top:460px;width:39px;height:1px;background:#f2f2f2"></div><div class="b" style="left:518px;top:464px;width:53px;height:1px;background:#dcdcdc"></div><div class="b" style="left:518px;top:539.2px;width:53px;height:1px;background:#f0f0f0"></div>
<span class="t" style="left:448.60px;top:566.10px;font-size:14.00px;letter-spacing:-0.919px;color:#263040;">9764_MORISSONSSAVER...</span>
<svg style="left:628px;top:565.2px;" width="3.2" height="14" viewBox="0 0 3.2 14"><circle cx="1.6" cy="1.7" r="1.55" fill="#c2c6cd"/><circle cx="1.6" cy="6.9" r="1.55" fill="#c2c6cd"/><circle cx="1.6" cy="12.1" r="1.55" fill="#c2c6cd"/></svg>
<span class="t" style="left:448.60px;top:594.10px;font-size:14.00px;letter-spacing:-0.416px;color:#4f5663;">7.58 kB</span>
<svg style="left:530px;top:593.5px;" width="16.5" height="14.5" viewBox="0 0 16.5 14.5"><path d="M1.1 6.1h14.3l-1.9 7.3H3z" fill="none" stroke="#2d3748" stroke-width="1.9" stroke-linejoin="round"/><path d="M4.6 5.8L8.25 .8l3.65 5" fill="none" stroke="#2d3748" stroke-width="1.8"/><circle cx="8.25" cy="9.7" r="1.3" fill="#2d3748"/></svg><svg style="left:551.4px;top:599.7px;" width="5.5" height="3.2" viewBox="0 0 5.5 3.2"><path d="M0 0h5.5L2.75 3.2z" fill="#2d3748"/></svg>
<div class="b" style="left:658px;top:442px;width:205px;height:179px;background:#fff;border:1px solid #e1e4e9;border-radius:6px"></div>
<div class="b" style="left:659px;top:555px;width:203px;height:1px;background:#e1e4e9"></div>
<div class="b" style="left:734px;top:460.7px;width:14.5px;height:1.8px;background:#333;opacity:.5"></div><div class="b" style="left:748.5px;top:460px;width:39px;height:1px;background:#f2f2f2"></div><div class="b" style="left:734px;top:464px;width:53px;height:1px;background:#dcdcdc"></div><div class="b" style="left:734px;top:539.2px;width:53px;height:1px;background:#f0f0f0"></div>
<span class="t" style="left:664.60px;top:566.10px;font-size:14.00px;letter-spacing:-0.919px;color:#263040;">9764_MORISSONSSAVER...</span>
<svg style="left:844px;top:565.2px;" width="3.2" height="14" viewBox="0 0 3.2 14"><circle cx="1.6" cy="1.7" r="1.55" fill="#c2c6cd"/><circle cx="1.6" cy="6.9" r="1.55" fill="#c2c6cd"/><circle cx="1.6" cy="12.1" r="1.55" fill="#c2c6cd"/></svg>
<span class="t" style="left:664.60px;top:594.10px;font-size:14.00px;letter-spacing:-0.416px;color:#4f5663;">7.58 kB</span>
<svg style="left:746px;top:593.5px;" width="16.5" height="14.5" viewBox="0 0 16.5 14.5"><path d="M1.1 6.1h14.3l-1.9 7.3H3z" fill="none" stroke="#2d3748" stroke-width="1.9" stroke-linejoin="round"/><path d="M4.6 5.8L8.25 .8l3.65 5" fill="none" stroke="#2d3748" stroke-width="1.8"/><circle cx="8.25" cy="9.7" r="1.3" fill="#2d3748"/></svg><svg style="left:767.4px;top:599.7px;" width="5.5" height="3.2" viewBox="0 0 5.5 3.2"><path d="M0 0h5.5L2.75 3.2z" fill="#2d3748"/></svg>
<div class="b" style="left:874px;top:442px;width:205px;height:179px;background:#fff;border:1px solid #e1e4e9;border-radius:6px"></div>
<div class="b" style="left:875px;top:555px;width:203px;height:1px;background:#e1e4e9"></div>
<div class="b" style="left:950px;top:460.7px;width:14.5px;height:1.8px;background:#333;opacity:.5"></div><div class="b" style="left:964.5px;top:460px;width:39px;height:1px;background:#f2f2f2"></div><div class="b" style="left:950px;top:464px;width:53px;height:1px;background:#dcdcdc"></div><div class="b" style="left:950px;top:539.2px;width:53px;height:1px;background:#f0f0f0"></div>
<span class="t" style="left:880.60px;top:566.10px;font-size:14.00px;letter-spacing:-0.919px;color:#263040;">9764_MORISSONSSAVER...</span>
<svg style="left:1060px;top:565.2px;" width="3.2" height="14" viewBox="0 0 3.2 14"><circle cx="1.6" cy="1.7" r="1.55" fill="#c2c6cd"/><circle cx="1.6" cy="6.9" r="1.55" fill="#c2c6cd"/><circle cx="1.6" cy="12.1" r="1.55" fill="#c2c6cd"/></svg>
<span class="t" style="left:880.60px;top:594.10px;font-size:14.00px;letter-spacing:-0.416px;color:#4f5663;">7.58 kB</span>
<svg style="left:962px;top:593.5px;" width="16.5" height="14.5" viewBox="0 0 16.5 14.5"><path d="M1.1 6.1h14.3l-1.9 7.3H3z" fill="none" stroke="#2d3748" stroke-width="1.9" stroke-linejoin="round"/><path d="M4.6 5.8L8.25 .8l3.65 5" fill="none" stroke="#2d3748" stroke-width="1.8"/><circle cx="8.25" cy="9.7" r="1.3" fill="#2d3748"/></svg><svg style="left:983.4px;top:599.7px;" width="5.5" height="3.2" viewBox="0 0 5.5 3.2"><path d="M0 0h5.5L2.75 3.2z" fill="#2d3748"/></svg>
<div class="b" style="left:1089px;top:442px;width:206px;height:179px;background:#fff;border:1px solid #e1e4e9;border-radius:6px"></div>
<div class="b" style="left:1090px;top:555px;width:204px;height:1px;background:#e1e4e9"></div>
<div class="b" style="left:1165px;top:460.7px;width:14.5px;height:1.8px;background:#333;opacity:.5"></div><div class="b" style="left:1179.5px;top:460px;width:39px;height:1px;background:#f2f2f2"></div><div class="b" style="left:1165px;top:464px;width:53px;height:1px;background:#dcdcdc"></div><div class="b" style="left:1165px;top:539.2px;width:53px;height:1px;background:#f0f0f0"></div>
<span class="t" style="left:1095.60px;top:566.10px;font-size:14.00px;letter-spacing:-0.919px;color:#263040;">9764_MORISSONSSAVER...</span>
<svg style="left:1275px;top:565.2px;" width="3.2" height="14" viewBox="0 0 3.2 14"><circle cx="1.6" cy="1.7" r="1.55" fill="#c2c6cd"/><circle cx="1.6" cy="6.9" r="1.55" fill="#c2c6cd"/><circle cx="1.6" cy="12.1" r="1.55" fill="#c2c6cd"/></svg>
<span class="t" style="left:1095.60px;top:594.10px;font-size:14.00px;letter-spacing:-0.416px;color:#4f5663;">7.58 kB</span>
<svg style="left:1177px;top:593.5px;" width="16.5" height="14.5" viewBox="0 0 16.5 14.5"><path d="M1.1 6.1h14.3l-1.9 7.3H3z" fill="none" stroke="#2d3748" stroke-width="1.9" stroke-linejoin="round"/><path d="M4.6 5.8L8.25 .8l3.65 5" fill="none" stroke="#2d3748" stroke-width="1.8"/><circle cx="8.25" cy="9.7" r="1.3" fill="#2d3748"/></svg><svg style="left:1198.4px;top:599.7px;" width="5.5" height="3.2" viewBox="0 0 5.5 3.2"><path d="M0 0h5.5L2.75 3.2z" fill="#2d3748"/></svg>
<div class="b" style="left:1305px;top:442px;width:206px;height:179px;background:#fff;border:1px solid #e1e4e9;border-radius:6px"></div>
<div class="b" style="left:1306px;top:555px;width:204px;height:1px;background:#e1e4e9"></div>
<div class="b" style="left:1381px;top:460.7px;width:14.5px;height:1.8px;background:#333;opacity:.5"></div><div class="b" style="left:1395.5px;top:460px;width:39px;height:1px;background:#f2f2f2"></div><div class="b" style="left:1381px;top:464px;width:53px;height:1px;background:#dcdcdc"></div><div class="b" style="left:1381px;top:539.2px;width:53px;height:1px;background:#f0f0f0"></div>
<span class="t" style="left:1311.60px;top:566.10px;font-size:14.00px;letter-spacing:-0.919px;color:#263040;">9764_MORISSONSSAVER...</span>
<svg style="left:1491px;top:565.2px;" width="3.2" height="14" viewBox="0 0 3.2 14"><circle cx="1.6" cy="1.7" r="1.55" fill="#c2c6cd"/><circle cx="1.6" cy="6.9" r="1.55" fill="#c2c6cd"/><circle cx="1.6" cy="12.1" r="1.55" fill="#c2c6cd"/></svg>
<span class="t" style="left:1311.60px;top:594.10px;font-size:14.00px;letter-spacing:-0.416px;color:#4f5663;">7.58 kB</span>
<svg style="left:1393px;top:593.5px;" width="16.5" height="14.5" viewBox="0 0 16.5 14.5"><path d="M1.1 6.1h14.3l-1.9 7.3H3z" fill="none" stroke="#2d3748" stroke-width="1.9" stroke-linejoin="round"/><path d="M4.6 5.8L8.25 .8l3.65 5" fill="none" stroke="#2d3748" stroke-width="1.8"/><circle cx="8.25" cy="9.7" r="1.3" fill="#2d3748"/></svg><svg style="left:1414.4px;top:599.7px;" width="5.5" height="3.2" viewBox="0 0 5.5 3.2"><path d="M0 0h5.5L2.75 3.2z" fill="#2d3748"/></svg>
<div class="b" style="left:11px;top:632px;width:205px;height:179px;background:#fff;border:1px solid #e1e4e9;border-radius:6px"></div>
<div class="b" style="left:12px;top:745px;width:203px;height:1px;background:#e1e4e9"></div>
<div class="b" style="left:87px;top:650.7px;width:14.5px;height:1.8px;background:#333;opacity:.5"></div><div class="b" style="left:101.5px;top:650px;width:39px;height:1px;background:#f2f2f2"></div><div class="b" style="left:87px;top:654px;width:53px;height:1px;background:#dcdcdc"></div><div class="b" style="left:87px;top:729.2px;width:53px;height:1px;background:#f0f0f0"></div>
<div class="b" style="left:226px;top:632px;width:206px;height:179px;background:#fff;border:1px solid #e1e4e9;border-radius:6px"></div>
<div class="b" style="left:227px;top:745px;width:204px;height:1px;background:#e1e4e9"></div>
<div class="b" style="left:302px;top:650.7px;width:14.5px;height:1.8px;background:#333;opacity:.5"></div><div class="b" style="left:316.5px;top:650px;width:39px;height:1px;background:#f2f2f2"></div><div class="b" style="left:302px;top:654px;width:53px;height:1px;background:#dcdcdc"></div><div class="b" style="left:302px;top:729.2px;width:53px;height:1px;background:#f0f0f0"></div>
<div class="b" style="left:442px;top:632px;width:205px;height:179px;background:#fff;border:1px solid #e1e4e9;border-radius:6px"></div>
<div class="b" style="left:443px;top:745px;width:203px;height:1px;background:#e1e4e9"></div>
<div class="b" style="left:518px;top:650.7px;width:14.5px;height:1.8px;background:#333;opacity:.5"></div><div class="b" style="left:532.5px;top:650px;width:39px;height:1px;background:#f2f2f2"></div><div class="b" style="left:518px;top:654px;width:53px;height:1px;background:#dcdcdc"></div><div class="b" style="left:518px;top:729.2px;width:53px;height:1px;background:#f0f0f0"></div>
<div class="b" style="left:658px;top:632px;width:205px;height:179px;background:#fff;border:1px solid #e1e4e9;border-radius:6px"></div>
<div class="b" style="left:659px;top:745px;width:203px;height:1px;background:#e1e4e9"></div>
<div class="b" style="left:734px;top:650.7px;width:14.5px;height:1.8px;background:#333;opacity:.5"></div><div class="b" style="left:748.5px;top:650px;width:39px;height:1px;background:#f2f2f2"></div><div class="b" style="left:734px;top:654px;width:53px;height:1px;background:#dcdcdc"></div><div class="b" style="left:734px;top:729.2px;width:53px;height:1px;background:#f0f0f0"></div>
<div class="b" style="left:874px;top:632px;width:205px;height:179px;background:#fff;border:1px solid #e1e4e9;border-radius:6px"></div>
<div class="b" style="left:875px;top:745px;width:203px;height:1px;background:#e1e4e9"></div>
<div class="b" style="left:950px;top:650.7px;width:14.5px;height:1.8px;background:#333;opacity:.5"></div><div class="b" style="left:964.5px;top:650px;width:39px;height:1px;background:#f2f2f2"></div><div class="b" style="left:950px;top:654px;width:53px;height:1px;background:#dcdcdc"></div><div class="b" style="left:950px;top:729.2px;width:53px;height:1px;background:#f0f0f0"></div>
<div class="b" style="left:1089px;top:632px;width:206px;height:179px;background:#fff;border:1px solid #e1e4e9;border-radius:6px"></div>
<div class="b" style="left:1090px;top:745px;width:204px;height:1px;background:#e1e4e9"></div>
<div class="b" style="left:1165px;top:650.7px;width:14.5px;height:1.8px;background:#333;opacity:.5"></div><div class="b" style="left:1179.5px;top:650px;width:39px;height:1px;background:#f2f2f2"></div><div class="b" style="left:1165px;top:654px;width:53px;height:1px;background:#dcdcdc"></div><div class="b" style="left:1165px;top:729.2px;width:53px;height:1px;background:#f0f0f0"></div>
<div class="b" style="left:1305px;top:632px;width:206px;height:179px;background:#fff;border:1px solid #e1e4e9;border-radius:6px"></div>
<div class="b" style="left:1306px;top:745px;width:204px;height:1px;background:#e1e4e9"></div>
<div class="b" style="left:1381px;top:650.7px;width:14.5px;height:1.8px;background:#333;opacity:.5"></div><div class="b" style="left:1395.5px;top:650px;width:39px;height:1px;background:#f2f2f2"></div><div class="b" style="left:1381px;top:654px;width:53px;height:1px;background:#dcdcdc"></div><div class="b" style="left:1381px;top:729.2px;width:53px;height:1px;background:#f0f0f0"></div>
</div>
<div class="b" style="left:1855.5px;top:218px;width:14.5px;height:653px;background:#fafafa"></div>
<svg style="left:1858.8px;top:227px;" width="8.5" height="7" viewBox="0 0 8.5 7"><path d="M4.25 .9L7.7 6.2H.8z" fill="#8c8c8c" stroke="#8c8c8c" stroke-width="1.5" stroke-linejoin="round"/></svg>
<svg style="left:1858.8px;top:856px;" width="8.5" height="7" viewBox="0 0 8.5 7"><path d="M.8 .8h6.9L4.25 6.1z" fill="#8c8c8c" stroke="#8c8c8c" stroke-width="1.5" stroke-linejoin="round"/></svg>
<div class="b" style="left:1858px;top:364px;width:8.5px;height:266px;background:#8c8c8c;border-radius:4.5px"></div>
<div class="b" style="left:335px;top:218px;width:1534px;height:1px;background:#e3e5e9"></div>
<footer>
<div class="b" style="left:350px;top:886px;width:32px;height:25px;background:#f9cad6;border-radius:5px"></div>
<span class="t" style="left:356.80px;top:891.52px;font-size:13.50px;font-weight:bold;letter-spacing:-1.525px;color:#6e0b28;">stg</span>
<span class="t" style="left:1732.00px;top:891.50px;font-size:14.00px;letter-spacing:-0.214px;color:#141414;">Powered by</span>
<svg style="left:1811px;top:881px;" width="45" height="35" viewBox="0 0 45 35"><rect x="1" y="1" width="43" height="33" fill="none" stroke="#1d9ae3" stroke-width="2"/><path d="M4.85 6.05h2.1a3.6 4.65 0 0 1 3.6 4.65a3.6 4.65 0 0 1-3.6 4.65h-2.1z" fill="none" stroke="#2a58a8" stroke-width="2.5" stroke-miterlimit="1.5"/><ellipse cx="20.95" cy="10.7" rx="4.4" ry="4.65" fill="none" stroke="#2a58a8" stroke-width="2.5" stroke-miterlimit="1.5"/><ellipse cx="34.3" cy="10.7" rx="4.3" ry="4.65" fill="none" stroke="#2a58a8" stroke-width="2.5" stroke-miterlimit="1.5"/><path d="M36.4 13.2l3.3 3.1" fill="none" stroke="#2a58a8" stroke-width="2.5" stroke-miterlimit="1.5"/><path d="M4.85 30.1V20.3l4.15 6.6 4.15-6.6v9.8" fill="none" stroke="#2a58a8" stroke-width="2.5" stroke-miterlimit="1.5"/><path d="M17.25 19.3v10.8" fill="none" stroke="#2a58a8" stroke-width="2.5" stroke-miterlimit="1.5"/><path d="M21.35 30.1V20.3l6.6 8.8v-9.8" fill="none" stroke="#2a58a8" stroke-width="2.5" stroke-miterlimit="1.5"/><path d="M33.05 20.35h3a3.6 4.35 0 0 1 3.6 4.35a3.6 4.35 0 0 1-3.6 4.35h-3z" fill="none" stroke="#2a58a8" stroke-width="2.5" stroke-miterlimit="1.5"/></svg>
</footer>
</main>
</div></div></body></html>
